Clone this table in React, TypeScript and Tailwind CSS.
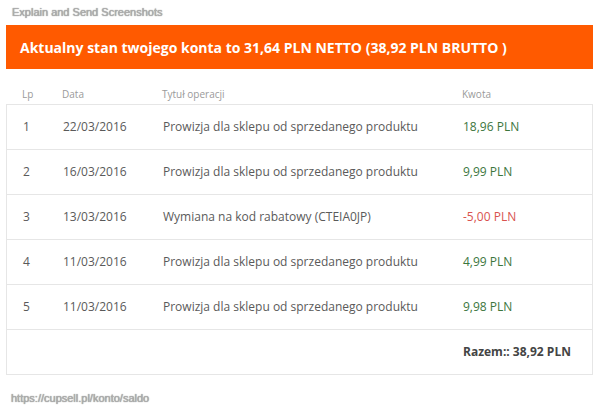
const rows = [
  { lp: 1, date: '22/03/2016', title: 'Prowizja dla sklepu od sprzedanego produktu', amount: '18,96 PLN', neg: false },
  { lp: 2, date: '16/03/2016', title: 'Prowizja dla sklepu od sprzedanego produktu', amount: '9,99 PLN', neg: false },
  { lp: 3, date: '13/03/2016', title: 'Wymiana na kod rabatowy (CTEIA0JP)', amount: '-5,00 PLN', neg: true },
  { lp: 4, date: '11/03/2016', title: 'Prowizja dla sklepu od sprzedanego produktu', amount: '4,99 PLN', neg: false },
  { lp: 5, date: '11/03/2016', title: 'Prowizja dla sklepu od sprzedanego produktu', amount: '9,98 PLN', neg: false },
];

const cols = 'grid grid-cols-[40px_100px_300px_1fr] pl-[16px]';

export default function App() {
  return (
    <div className="w-[611px] h-[413px] bg-white font-['Open_Sans',sans-serif] overflow-hidden">
      <div className="px-[12px] pt-[5px] h-[25px] text-[11px] leading-[14px] text-[#b0b0b0] font-['Liberation_Sans',sans-serif] [text-shadow:0_0_1px_#666]">
        Explain and Send Screenshots
      </div>

      <div className="mx-[6px] w-[587px]">
        {/* Balance banner */}
        <div className="h-[44px] bg-[#ff5a00] flex items-center px-[14px] text-white font-bold text-[14px]">
          Aktualny stan twojego konta to 31,64 PLN NETTO (38,92 PLN BRUTTO )
        </div>

        {/* Header */}
        <div className={`${cols} h-[35px] items-end pb-[2px] text-[10px] text-[#9a9a9a]`}>
          <div>Lp</div>
          <div>Data</div>
          <div>Tytuł operacji</div>
          <div>Kwota</div>
        </div>

        {/* Table */}
        <div className="border border-[#e6e6e6] text-[12px] text-[#5a5a5a]">
          {rows.map((r) => (
            <div key={r.lp} className={`${cols} h-[45px] items-center border-b border-[#e6e6e6] pl-[15px]`}>
              <div>{r.lp}</div>
              <div>{r.date}</div>
              <div>{r.title}</div>
              <div className={r.neg ? 'text-[#d9534f]' : 'text-[#3c763d]'}>{r.amount}</div>
            </div>
          ))}
          <div className={`${cols} h-[44px] items-center pl-[15px]`}>
            <div />
            <div />
            <div />
            <div className="font-bold text-[#444]">Razem:: 38,92 PLN</div>
          </div>
        </div>
      </div>

      <div className="px-[11px] pt-[16px] text-[11px] leading-[14px] text-[#b0b0b0] font-['Liberation_Sans',sans-serif] [text-shadow:0_0_1px_#666]">
        https://cupsell.pl/konto/saldo
      </div>
    </div>
  );
}
